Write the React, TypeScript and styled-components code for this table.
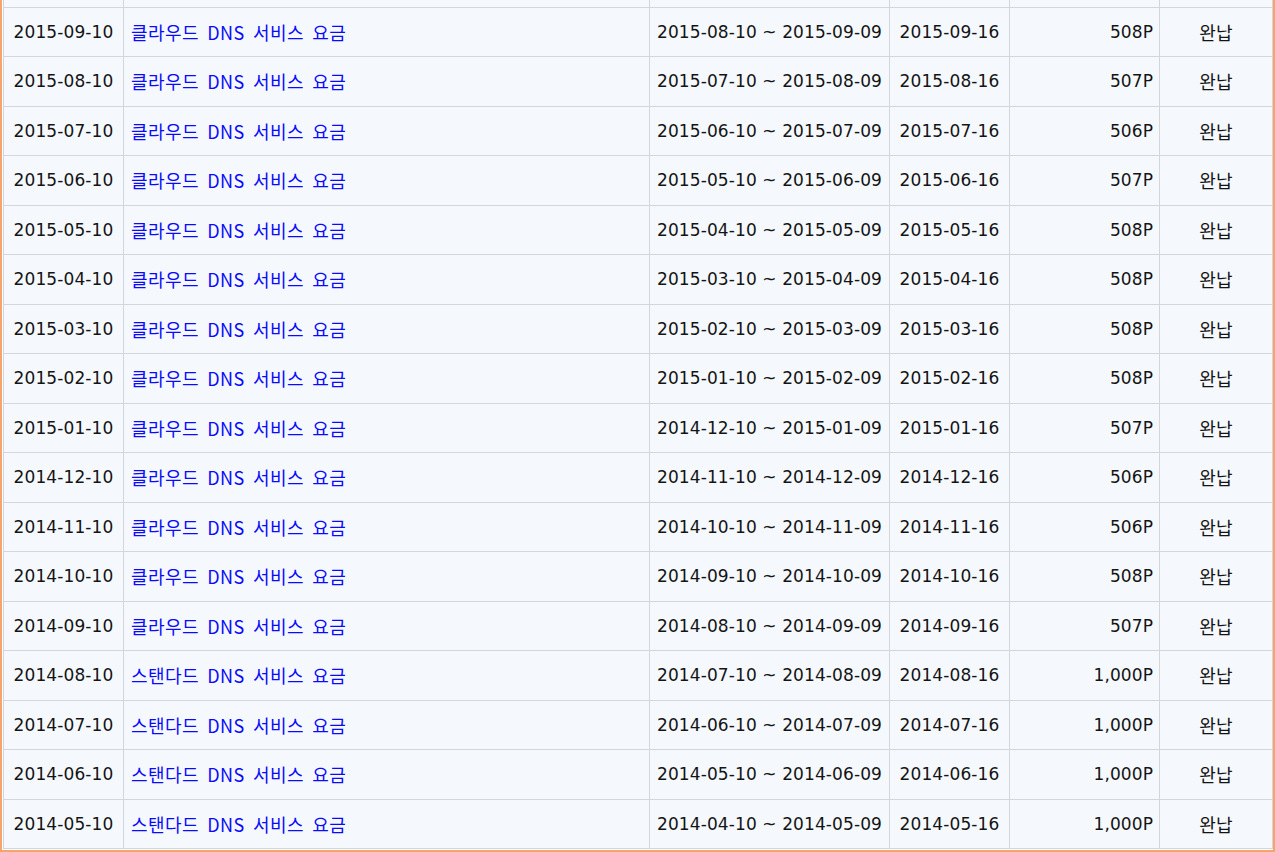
import React from "react";
import styled, { createGlobalStyle } from "styled-components";

const GlobalStyle = createGlobalStyle`
  html, body {
    margin: 0;
    padding: 0;
    background: #ffffff;
    overflow: hidden;
  }
  body {
    font-family: "DejaVu Sans", "Noto Sans CJK KR", sans-serif;
  }
`;

const Frame = styled.div`
  border: 2px solid #f6a36d;
  border-top: 0;
  padding: 0 1px 1px 1px;
  background: #ffffff;
  width: 1269px;
`;

const Table = styled.table`
  width: 1269px;
  border-collapse: collapse;
  table-layout: fixed;
  background: #f5f9fe;
  font-family: "DejaVu Sans", "Noto Sans CJK KR", sans-serif;
  font-size: 17px;
  letter-spacing: 0.1px;
  color: #141414;
`;

const Col = styled.col<{ $width: number }>`
  width: ${(p) => p.$width}px;
`;

const Row = styled.tr`
  height: 49.5px;
`;

const ClippedRow = styled.tr`
  height: 7px;
`;

const ClippedCell = styled.td`
  border: 1px solid #d4d6d9;
  border-top: 0;
  padding: 0;
`;

const Cell = styled.td<{ $align?: "left" | "center" | "right" }>`
  border: 1px solid #d4d6d9;
  padding: ${(p) => (p.$align === "left" ? "0 7px 0 7px" : p.$align === "right" ? "0 6px 0 8px" : "0 4px")};
  text-align: ${(p) => p.$align ?? "center"};
  vertical-align: middle;
  white-space: nowrap;
  overflow: hidden;
`;

const ItemLink = styled.a`
  color: #0a0aff;
  text-decoration: none;
  cursor: pointer;
  font-family: "Noto Sans CJK KR", "DejaVu Sans", sans-serif;
  font-size: 18px;
  letter-spacing: 0.4px;
  word-spacing: 4px;
`;

const Status = styled.span`
  font-family: "Noto Sans CJK KR", "DejaVu Sans", sans-serif;
  font-size: 18px;
`;

type Bill = {
  date: string;
  plan: string;
  from: string;
  to: string;
  due: string;
  amount: string;
};

const bills: Bill[] = [
  { date: "2015-09-10", plan: "클라우드", from: "2015-08-10", to: "2015-09-09", due: "2015-09-16", amount: "508P" },
  { date: "2015-08-10", plan: "클라우드", from: "2015-07-10", to: "2015-08-09", due: "2015-08-16", amount: "507P" },
  { date: "2015-07-10", plan: "클라우드", from: "2015-06-10", to: "2015-07-09", due: "2015-07-16", amount: "506P" },
  { date: "2015-06-10", plan: "클라우드", from: "2015-05-10", to: "2015-06-09", due: "2015-06-16", amount: "507P" },
  { date: "2015-05-10", plan: "클라우드", from: "2015-04-10", to: "2015-05-09", due: "2015-05-16", amount: "508P" },
  { date: "2015-04-10", plan: "클라우드", from: "2015-03-10", to: "2015-04-09", due: "2015-04-16", amount: "508P" },
  { date: "2015-03-10", plan: "클라우드", from: "2015-02-10", to: "2015-03-09", due: "2015-03-16", amount: "508P" },
  { date: "2015-02-10", plan: "클라우드", from: "2015-01-10", to: "2015-02-09", due: "2015-02-16", amount: "508P" },
  { date: "2015-01-10", plan: "클라우드", from: "2014-12-10", to: "2015-01-09", due: "2015-01-16", amount: "507P" },
  { date: "2014-12-10", plan: "클라우드", from: "2014-11-10", to: "2014-12-09", due: "2014-12-16", amount: "506P" },
  { date: "2014-11-10", plan: "클라우드", from: "2014-10-10", to: "2014-11-09", due: "2014-11-16", amount: "506P" },
  { date: "2014-10-10", plan: "클라우드", from: "2014-09-10", to: "2014-10-09", due: "2014-10-16", amount: "508P" },
  { date: "2014-09-10", plan: "클라우드", from: "2014-08-10", to: "2014-09-09", due: "2014-09-16", amount: "507P" },
  { date: "2014-08-10", plan: "스탠다드", from: "2014-07-10", to: "2014-08-09", due: "2014-08-16", amount: "1,000P" },
  { date: "2014-07-10", plan: "스탠다드", from: "2014-06-10", to: "2014-07-09", due: "2014-07-16", amount: "1,000P" },
  { date: "2014-06-10", plan: "스탠다드", from: "2014-05-10", to: "2014-06-09", due: "2014-06-16", amount: "1,000P" },
  { date: "2014-05-10", plan: "스탠다드", from: "2014-04-10", to: "2014-05-09", due: "2014-05-16", amount: "1,000P" },
];

const widths = [120, 526, 240, 120, 150, 113];

export default function App() {
  return (
    <>
      <GlobalStyle />
      <Frame>
        <Table>
          <colgroup>
            {widths.map((w, i) => (
              <Col key={i} $width={w} />
            ))}
          </colgroup>
          <tbody>
            <ClippedRow>
              {widths.map((_, i) => (
                <ClippedCell key={i} />
              ))}
            </ClippedRow>
            {bills.map((b) => (
              <Row key={b.date}>
                <Cell>{b.date}</Cell>
                <Cell $align="left">
                  <ItemLink>{b.plan} DNS 서비스 요금</ItemLink>
                </Cell>
                <Cell>
                  {b.from} ~ {b.to}
                </Cell>
                <Cell>{b.due}</Cell>
                <Cell $align="right">{b.amount}</Cell>
                <Cell>
                  <Status>완납</Status>
                </Cell>
              </Row>
            ))}
          </tbody>
        </Table>
      </Frame>
    </>
  );
}
